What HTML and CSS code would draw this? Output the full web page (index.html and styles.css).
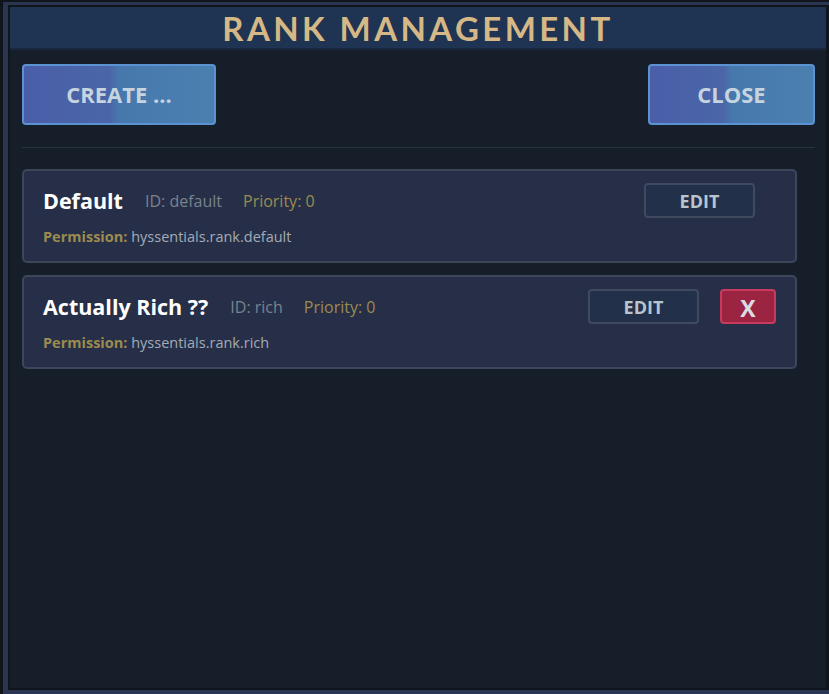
FILE: index.html
```html
<!DOCTYPE html>
<html lang="en">
<head>
    <meta charset="UTF-8">
    <meta name="viewport" content="width=device-width, initial-scale=1.0">
    <title>Rank Management</title>
    <link rel="stylesheet" href="styles.css">
</head>
<body>

    <div class="shell">
        <div class="rim">
            <div class="panel">

                <div class="panel-header">
                    <h1>RANK MANAGEMENT</h1>
                </div>

                <div class="panel-body">
                    <div class="toolbar">
                        <button class="big-button create-button">CREATE ...</button>
                        <button class="big-button close-button">CLOSE</button>
                    </div>

                    <div class="separator"></div>

                    <div class="rank-list">
                        <!-- rank: default -->
                        <div class="rank-card">
                            <div class="rank-top">
                                <span class="rank-name">Default</span>
                                <span class="rank-id">ID: default</span>
                                <span class="rank-priority">Priority: 0</span>
                                <div class="rank-actions rank-actions-single">
                                    <button class="edit-button">EDIT</button>
                                </div>
                            </div>
                            <div class="rank-permission">
                                <span class="perm-label">Permission:</span>
                                <span class="perm-value">hyssentials.rank.default</span>
                            </div>
                        </div>

                        <!-- rank: rich -->
                        <div class="rank-card">
                            <div class="rank-top">
                                <span class="rank-name">Actually Rich ??</span>
                                <span class="rank-id">ID: rich</span>
                                <span class="rank-priority">Priority: 0</span>
                                <div class="rank-actions">
                                    <button class="edit-button">EDIT</button>
                                    <button class="delete-button">X</button>
                                </div>
                            </div>
                            <div class="rank-permission">
                                <span class="perm-label">Permission:</span>
                                <span class="perm-value">hyssentials.rank.rich</span>
                            </div>
                        </div>
                    </div>
                </div>

            </div>
        </div>
    </div>

</body>
</html>
```

FILE: styles.css
```css
* {
    box-sizing: border-box;
}

body {
    margin: 0;
    background-color: #10151c;
    font-family: "Open Sans", Lato, sans-serif;
}

.shell {
    height: 694px;
    padding: 2px 0 0 3px;
}

.rim {
    height: 100%;
    border-style: solid;
    border-color: #2a3552;
    border-width: 3px 0 4px 5px;
    padding: 2px 3px 2px 2px;
    display: flex;
}

.panel {
    flex: 1;
    display: flex;
    flex-direction: column;
    background-color: #161e2a;
}

.panel-header {
    height: 43px;
    background-color: #1f3352;
    border-bottom: 2px solid #19283d;
    display: flex;
    align-items: center;
    justify-content: center;
}

.panel-header h1 {
    margin: 0;
    color: #d5b886;
    font-family: Lato, sans-serif;
    font-size: 33px;
    font-weight: 700;
    letter-spacing: 3.4px;
}

.panel-body {
    padding: 14px 11px 0 12px;
}

.toolbar {
    display: flex;
    justify-content: space-between;
}

.big-button {
    height: 61px;
    border: 2px solid #5a92d2;
    border-radius: 4px;
    background: linear-gradient(to right, #4a5ea8 0%, #4a66a8 45%, #4778ad 50%, #4a80b0 100%);
    color: #c6d4df;
    font-family: "Open Sans", sans-serif;
    font-size: 22px;
    font-weight: 700;
    padding-bottom: 2px;
    cursor: pointer;
}

.create-button {
    width: 194px;
}

.close-button {
    width: 167px;
}

.separator {
    height: 1px;
    background-color: #27313f;
    margin: 22px 0 21px 0;
}

.rank-list {
    display: flex;
    flex-direction: column;
    gap: 12px;
    margin-right: 18px;
}

.rank-card {
    height: 94px;
    background-color: #262f47;
    border: 2px solid #3d475b;
    border-radius: 5px;
    padding: 12px 19px 0 19px;
}

.rank-top {
    display: flex;
    align-items: center;
    height: 35px;
}

.rank-name {
    color: #ffffff;
    font-size: 21.5px;
    font-weight: 700;
    margin-right: 22px;
}

.rank-id {
    color: #7a828e;
    font-size: 16px;
    margin-right: 21px;
}

.rank-priority {
    color: #9c8b50;
    font-size: 16px;
}

.rank-actions {
    margin-left: auto;
    display: flex;
    gap: 21px;
}

.rank-actions-single {
    margin-right: 21px;
}

.edit-button {
    width: 111px;
    height: 35px;
    background-color: #223049;
    border: 2px solid #3f4a5f;
    border-radius: 4px;
    color: #b9c5cd;
    font-family: "Open Sans", sans-serif;
    font-size: 18px;
    font-weight: 700;
    cursor: pointer;
}

.delete-button {
    width: 56px;
    height: 35px;
    background-color: #9b2442;
    border: 2px solid #c93b5e;
    border-radius: 4px;
    color: #d9dee3;
    font-family: "Open Sans", sans-serif;
    font-size: 23px;
    font-weight: 700;
    cursor: pointer;
}

.rank-permission {
    margin-top: 9px;
    font-size: 14.5px;
}

.perm-label {
    color: #9c8b50;
    font-weight: 700;
}

.perm-value {
    color: #a3abb7;
}
```
